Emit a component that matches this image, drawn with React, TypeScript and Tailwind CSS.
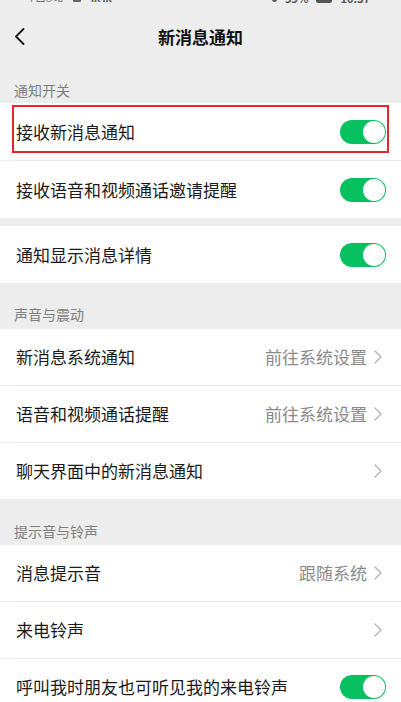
import type { ReactNode } from "react";

const Toggle = () => (
  <div className="flex h-[24px] w-[46px] items-center justify-end rounded-full bg-[#07c160] p-[1px]">
    <div className="h-[22px] w-[22px] rounded-full bg-white" />
  </div>
);

const Chevron = () => (
  <svg width="8" height="14" viewBox="0 0 8 14" fill="none">
    <path d="M1 1l6 6-6 6" stroke="#b2b2b2" strokeWidth="1.4" strokeLinecap="round" strokeLinejoin="round" />
  </svg>
);

const Divider = () => <div className="ml-4 h-px bg-[#e8e8e8]" />;

const SectionLabel = ({ children, className }: { children: ReactNode; className: string }) => (
  <div className={`flex items-end px-[14px] text-[14px] leading-[20px] text-[#7f7f7f] ${className}`}>
    {children}
  </div>
);

const SwitchRow = ({ title }: { title: string }) => (
  <div className="flex h-[57px] items-center justify-between bg-white pl-4 pr-[15px]">
    <span className="text-[17px] text-[#1a1a1a]">{title}</span>
    <Toggle />
  </div>
);

const LinkRow = ({ title, value }: { title: string; value?: string }) => (
  <div className="flex h-[56px] items-center justify-between bg-white pl-4 pr-[19px]">
    <span className="text-[17px] text-[#1a1a1a]">{title}</span>
    <div className="flex items-center gap-[7px]">
      {value && <span className="text-[17px] text-[#8a8a8a]">{value}</span>}
      <Chevron />
    </div>
  </div>
);

export default function App() {
  return (
    <div className="h-[702px] w-[401px] overflow-hidden bg-[#ededed] font-['Noto_Sans_CJK_SC','Noto_Sans',sans-serif]">
      {/* status bar, mostly cut off at the top edge */}
      <div className="h-[7px] overflow-hidden">
        <div className="-mt-[9px] flex items-center justify-between pl-[27px] pr-[31px] text-[11px] leading-[14px] text-[#555]">
          <div className="flex items-center gap-[10px]">
            <span className="text-[9px]">中国移动</span>
            <span className="inline-block h-[8px] w-[8px] rounded-[1px] bg-[#666]" />
            <span className="text-[10px] font-bold">ııl ııl</span>
          </div>
          <div className="flex items-center gap-[8px] font-bold">
            <span className="inline-block h-[8px] w-[5px] rounded-full bg-[#555]" />
            <span>55%</span>
            <span className="inline-block h-[9px] w-[16px] rounded-[2px] bg-[#555]" />
            <span>10:37</span>
          </div>
        </div>
      </div>

      {/* header */}
      <div className="flex h-[59px] items-center px-[14px]">
        <svg width="11" height="17" viewBox="0 0 11 17" fill="none">
          <path d="M9.5 1L2 8.5 9.5 16" stroke="#1a1a1a" strokeWidth="1.8" strokeLinecap="round" strokeLinejoin="round" />
        </svg>
        <div className="flex-1 pr-[11px] text-center text-[17px] font-bold text-[#111]">新消息通知</div>
      </div>

      <SectionLabel className="h-[37px] pb-[3px]">通知开关</SectionLabel>

      <div className="relative">
        <SwitchRow title="接收新消息通知" />
        <div className="absolute left-[12px] top-[2px] h-[48px] w-[377px] border-2 border-[#e3262c]" />
      </div>
      <Divider />
      <SwitchRow title="接收语音和视频通话邀请提醒" />

      <div className="h-[8px]" />
      <SwitchRow title="通知显示消息详情" />

      <SectionLabel className="h-[46px] pb-[5px]">声音与震动</SectionLabel>
      <LinkRow title="新消息系统通知" value="前往系统设置" />
      <Divider />
      <LinkRow title="语音和视频通话提醒" value="前往系统设置" />
      <Divider />
      <LinkRow title="聊天界面中的新消息通知" />

      <SectionLabel className="h-[46px] pb-[4px]">提示音与铃声</SectionLabel>
      <LinkRow title="消息提示音" value="跟随系统" />
      <Divider />
      <LinkRow title="来电铃声" />
      <Divider />
      <div className="flex h-[56px] items-center justify-between bg-white pl-4 pr-[15px]">
        <span className="text-[17px] text-[#1a1a1a]">呼叫我时朋友也可听见我的来电铃声</span>
        <Toggle />
      </div>
    </div>
  );
}
